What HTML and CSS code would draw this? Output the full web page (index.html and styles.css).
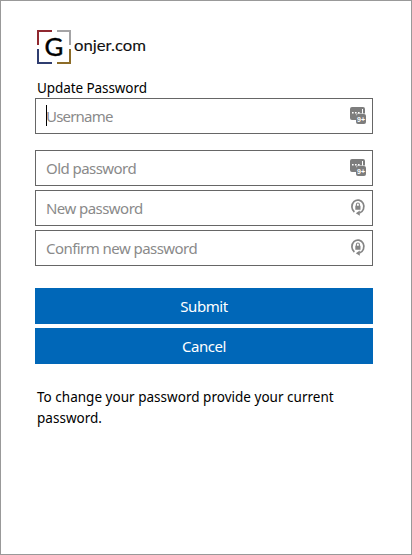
FILE: index.html
```html
<!DOCTYPE html>
<html lang="en">
<head>
<meta charset="utf-8">
<title>Update Password</title>
<link rel="stylesheet" href="styles.css">
</head>
<body>
<svg width="0" height="0" class="symbols" aria-hidden="true">
  <symbol id="saved" viewBox="0 0 18 18">
    <path fill="#7d7d7d" d="M3 1h11a2 2 0 0 1 2 2v4.5H9a2 2 0 0 0-2 2V14H3a2 2 0 0 1-2-2V3a2 2 0 0 1 2-2z"/>
    <rect x="7" y="8" width="10" height="10" rx="2" fill="#7d7d7d"/>
    <path fill="#fff" d="M3 6h1.6v1.4H3zM6 6h1.6v1.4H6zM9 6h1.6v1.4H9zM13 3h1v4.4h-1z"/>
  </symbol>
  <symbol id="generate" viewBox="0 0 18 18">
    <path fill="none" stroke="#858585" stroke-width="1.7" d="M5.4 14A6 6.6 0 1 1 10.5 15"/>
    <path fill="#858585" d="M10.8 12.4v5.4L6.8 15.2zM6.3 7.7h5.2v4H6.3z"/>
    <path fill="none" stroke="#858585" stroke-width="1.1" d="M7.4 8V6.5a1.5 1.5 0 0 1 3 0V8"/>
  </symbol>
</svg>
<main class="panel">
  <svg class="logo" width="112" height="36" viewBox="0 0 112 36">
    <g fill="none" stroke-width="2">
      <path stroke="#90282f" d="M1 15V1h14"/>
      <path stroke="#a4a4a6" d="M20 1h13v14"/>
      <path stroke="#2f3d70" d="M1 19v14h14"/>
      <path stroke="#8c6c28" d="M20 33h13V19"/>
    </g>
    <text class="logo-g" x="7.6" y="25.5" textLength="18.8" lengthAdjust="spacingAndGlyphs">G</text>
    <text class="logo-name" x="37" y="21" textLength="72" lengthAdjust="spacingAndGlyphs">onjer.com</text>
  </svg>
  <h1 class="title">Update Password</h1>
  <form class="form">
    <div class="field username">
      <input class="input" type="text" placeholder="Username">
      <span class="caret"></span>
      <svg class="icon" viewBox="0 0 18 18"><use href="#saved"/><text x="8" y="15.8" class="badge">9+</text></svg>
    </div>
    <div class="field">
      <input class="input" type="password" placeholder="Old password">
      <svg class="icon" viewBox="0 0 18 18"><use href="#saved"/><text x="8" y="15.8" class="badge">9+</text></svg>
    </div>
    <div class="field">
      <input class="input" type="password" placeholder="New password">
      <svg class="icon" viewBox="0 0 18 18"><use href="#generate"/></svg>
    </div>
    <div class="field">
      <input class="input" type="password" placeholder="Confirm new password">
      <svg class="icon" viewBox="0 0 18 18"><use href="#generate"/></svg>
    </div>
    <div class="actions">
      <button class="button" type="button">Submit</button>
      <button class="button" type="button">Cancel</button>
    </div>
  </form>
  <p class="help">To change your password provide your current password.</p>
</main>
</body>
</html>
```
FILE: styles.css
```css
* { box-sizing: border-box; }
body {
  margin: 0;
  background: #fff;
  color: #000;
  font-family: "Segoe UI", "Noto Sans", sans-serif;
}
.symbols { position: absolute; }
.panel {
  height: 555px;
  padding: 29px 38px 0 34px;
  border: 1px solid #999;
}
.logo { display: block; margin-left: 2px; }
.logo-g { font: 25px Lato, sans-serif; stroke: #000; stroke-width: .4; }
.logo-name { font: 400 16px Lato, sans-serif; fill: #111; stroke: #111; stroke-width: .1; }
.badge { font: bold 7px "Liberation Sans", sans-serif; fill: #fff; }
.title {
  margin: 12px 0 0 2px;
  font-size: 13.5px;
  font-weight: 400;
  line-height: 20px;
  letter-spacing: -.08px;
}
.form { display: flex; flex-direction: column; gap: 4px; }
.field { position: relative; height: 36px; }
.username { margin-bottom: 12px; }
.input {
  display: block;
  width: 100%;
  height: 36px;
  padding: 0 36px 0 10px;
  border: 1px solid #666;
  border-radius: 0;
  outline: 0;
  background: #fff;
  font: 15px "Segoe UI", "Noto Sans", sans-serif;
  letter-spacing: -.55px;
}
.username .input { letter-spacing: -.8px; }
.input::placeholder { color: #8a8a8a; opacity: 1; }
.caret {
  position: absolute;
  left: 11px;
  top: 7px;
  width: 1px;
  height: 21px;
  background: #000;
}
.icon {
  position: absolute;
  right: 6px;
  top: 8px;
  width: 18px;
  height: 18px;
}
.actions { display: flex; flex-direction: column; gap: 4px; margin-top: 18px; }
.button {
  height: 36px;
  padding: 0;
  border: 0;
  background: #0067b8;
  color: #fff;
  font: 15px "Segoe UI", "Noto Sans", sans-serif;
  letter-spacing: -.45px;
}
.help {
  margin: 23px 0 0 2px;
  font-size: 13.5px;
  line-height: 21px;
  letter-spacing: .02px;
}
```
